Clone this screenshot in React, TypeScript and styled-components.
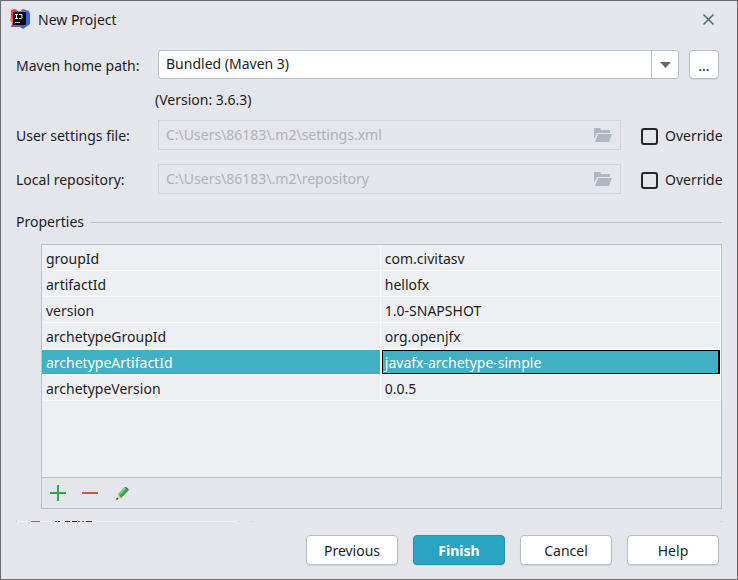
import React, { useState } from "react";
import styled, { createGlobalStyle, css } from "styled-components";

const GlobalStyle = createGlobalStyle`
  * { box-sizing: border-box; }
  body { margin: 0; background: #e4e6eb; }
  body, button, input, select {
    font-family: "Noto Sans", "Open Sans", sans-serif;
    font-size: 14px;
    line-height: 20px;
    color: #1d1d1d;
  }
`;

const Dialog = styled.main`
  display: flex;
  flex-direction: column;
  min-height: 100vh;
  padding: 0 15px 14px;
  border: 1px solid #6b6b6e;
  background: #e4e6eb;
`;

const TitleBar = styled.header`
  display: flex;
  align-items: center;
  height: 36px;
  margin-left: -6px;
`;

const Title = styled.h1`
  flex: 1;
  margin: 0 0 0 7px;
  padding-top: 1px;
  font-size: 14px;
  font-weight: 400;
`;

const CloseButton = styled.button`
  display: flex;
  margin-right: 7px;
  padding: 0;
  border: 0;
  background: none;
`;

const Form = styled.form`
  display: grid;
  grid-template-columns: 142px 1fr;
  align-items: center;
  margin-top: 13px;
`;

const FieldLabel = styled.label`
  padding-top: 2px;
  white-space: nowrap;
`;

const Controls = styled.div`
  display: flex;
  align-items: center;
  gap: 10px;
  height: 29px;
  padding-right: 3px;
`;

const ComboFrame = styled.div`
  display: flex;
  flex: 1;
  position: relative;
`;

const Combo = styled.select`
  flex: 1;
  height: 29px;
  padding: 0 34px 2px 7px;
  appearance: none;
  border: 1px solid #b4bfca;
  border-radius: 3px;
  background: #fff;
`;

const ComboArrow = styled.span`
  position: absolute;
  top: 1px;
  right: 1px;
  bottom: 1px;
  display: flex;
  align-items: center;
  justify-content: center;
  width: 27px;
  border-left: 1px solid #b4bfca;
  pointer-events: none;
`;

const buttonFace = css`
  padding: 0;
  border: 1px solid #b4bfca;
  border-radius: 4px;
  background: #fff;
  box-shadow: 0 1px 1px #cfd4db;
`;

const MoreButton = styled.button`
  ${buttonFace}
  width: 30px;
  height: 29px;
  padding-top: 3px;
`;

const Version = styled.p`
  grid-column: 2;
  margin: 11px 0 10px -3px;
`;

const PathRow = styled.div`
  display: flex;
  align-items: center;
  gap: 20px;
  height: 30px;
`;

const PathFrame = styled.div`
  display: flex;
  flex: 1;
  align-items: center;
  height: 30px;
  padding: 0 8px 0 7px;
  border: 1px solid #d0d3d6;
`;

const PathInput = styled.input`
  flex: 1;
  min-width: 0;
  height: 28px;
  padding: 0 0 2px;
  border: 0;
  outline: 0;
  background: none;
  &:disabled { color: #b1b3b6; }
`;

const CheckLabel = styled.label`
  display: flex;
  align-items: center;
  gap: 7px;
  width: 81px;
  padding-top: 2px;
  white-space: nowrap;
`;

const CheckBox = styled.input`
  flex: none;
  appearance: none;
  width: 17px;
  height: 17px;
  margin: 0;
  border: 2px solid #252826;
  border-radius: 3px;
  &:checked { background: #29a4c3; }
`;

const Spacer = styled.div`
  grid-column: 1 / -1;
  height: 14px;
`;

const Section = styled.section`
  display: flex;
  flex: 1;
  flex-direction: column;
`;

const SectionTitle = styled.h2`
  display: flex;
  align-items: center;
  gap: 7px;
  margin: 18px 0 12px;
  font-size: 14px;
  font-weight: 400;
  &::after {
    content: "";
    flex: 1;
    height: 1px;
    background: #b9c2cc;
  }
`;

const TablePanel = styled.div`
  display: flex;
  flex: 1;
  flex-direction: column;
  margin-left: 25px;
  border: 1px solid #b9c2cc;
  background: #eeeff3;
`;

const Table = styled.table`
  width: 100%;
  table-layout: fixed;
  border-collapse: separate;
  border-spacing: 0;
`;

const NameColumn = styled.col`
  width: 49.9%;
`;

const Cell = styled.td<{ $selected?: boolean; $focused?: boolean }>`
  height: 26px;
  padding: 2px 4px 0;
  border: solid #f8f9fb;
  border-width: 0 1px 1px 0;
  ${({ $selected }) =>
    $selected &&
    css`
      padding-top: 1px;
      border-top-width: 1px;
      background: #40b0c4;
      background-clip: padding-box;
      color: #fff;
    `}
  ${({ $focused }) =>
    $focused &&
    css`
      padding-left: 3px;
      border-left-width: 1px;
      box-shadow: inset 0 0 0 1px #000, inset -2px 0 0 #000;
    `}
`;

const ToolBar = styled.div`
  display: flex;
  align-items: center;
  gap: 16px;
  height: 31px;
  margin-top: auto;
  padding-left: 8px;
  border-top: 1px solid #b9c2cc;
  background: #e4e6eb;
`;

const ToolButton = styled.button`
  display: flex;
  padding: 0;
  border: 0;
  background: none;
`;

const ClippedRow = styled.div`
  display: flex;
  height: 1px;
  margin-top: 12px;
  overflow: hidden;
`;

const Strip = styled.span<{ $width: number; $color: string }>`
  flex: none;
  width: ${({ $width }) => $width}px;
  background: ${({ $color }) => $color};
`;

const StripFill = styled.span`
  flex: 1;
`;

const Footer = styled.footer`
  display: flex;
  justify-content: flex-end;
  gap: 15px;
  margin-top: 13px;
  padding-right: 3px;
`;

const DialogButton = styled.button<{ $primary?: boolean }>`
  ${buttonFace}
  width: 92px;
  height: 30px;
  padding-top: 2px;
  ${({ $primary }) =>
    $primary &&
    css`
      border-color: #2a8fa9;
      background: #29a4c3;
      color: #fff;
      font-weight: 700;
    `}
`;

const AppLogo = () => (
  <svg width="21" height="20" viewBox="0 0 21 20" aria-hidden="true">
    <path d="M1 7 5 6 8 13 4 15 0 12z" fill="#fc801d" />
    <path d="M1 1 5 0 10 3 9 9 3 10 1 8z" fill="#fe315d" />
    <path d="M1 18 3 12 12 14 10 18z" fill="#9a3fb5" />
    <path d="M10 3 13 0 19 2 20 5 20 15 13 20 7 16z" fill="#3c66d8" />
    <path d="M9 3 13 0 15 3z" fill="#8b62d9" />
    <rect x="3" y="3" width="13" height="13" fill="#08080a" />
    <path d="M5 5.500h3M6.500 5.500v4M5 9.500h3M9 5.500h3v3q0 1-1 1H9" fill="none" stroke="#fff" strokeWidth="1" />
    <path d="M5 13.500h5" stroke="#b4b4b4" />
  </svg>
);

const CloseIcon = () => (
  <svg width="13" height="13" viewBox="0 0 13 13" aria-hidden="true">
    <path d="M1.500 1.500l10 10M11.500 1.500l-10 10" stroke="#546e7a" strokeWidth="1.600" />
  </svg>
);

const ArrowIcon = () => (
  <svg width="11" height="6" viewBox="0 0 11 6" aria-hidden="true">
    <path d="M0 0h11L5.500 6z" fill="#666" />
  </svg>
);

const FolderIcon = () => (
  <svg width="18" height="14" viewBox="0 0 18 14" aria-hidden="true">
    <path d="M0 0h6l1 2h9v3H3L0 11z" fill="#afb8bf" />
    <path d="M4 6h14l-3 8H1z" fill="#afb8bf" />
  </svg>
);

const AddIcon = () => (
  <svg width="16" height="16" viewBox="0 0 16 16" aria-hidden="true">
    <path d="M8 0v16M0 8h16" stroke="#2ba84a" strokeWidth="2" />
  </svg>
);

const RemoveIcon = () => (
  <svg width="16" height="16" viewBox="0 0 16 16" aria-hidden="true">
    <path d="M0 8h16" stroke="#cc5449" strokeWidth="2" />
  </svg>
);

const EditIcon = () => (
  <svg width="16" height="16" viewBox="0 0 16 16" aria-hidden="true">
    <path d="M4 9 7 13 3 14.500 2.500 14z" fill="#f0c98c" />
    <path d="M2 15 3 12.500 4.500 14z" fill="#333" />
    <path d="M4 9 10.500 2.500 14.500 5.500 7 13z" fill="#35a24c" />
    <path d="M4 9 10.500 2.500 12 3.800 5.500 10.600z" fill="#78d47f" />
    <path d="M10.500 2.500 12 2 14.500 4 14.500 5.500z" fill="#5a5560" />
  </svg>
);

const properties = [
  ["groupId", "com.civitasv"],
  ["artifactId", "hellofx"],
  ["version", "1.0-SNAPSHOT"],
  ["archetypeGroupId", "org.openjfx"],
  ["archetypeArtifactId", "javafx-archetype-simple"],
  ["archetypeVersion", "0.0.5"],
];

const clippedStrips: [number, string][] = [
  [1, "#b9c2cc"], [14, "#f1f2f5"], [9, "#5080e0"], [15, "#f1f2f5"],
  [2, "#3c506e"], [1, "#f1f2f5"], [2, "#3a2c2c"], [5, "#f1f2f5"],
  [5, "#222"], [2, "#f1f2f5"], [5, "#222"], [1, "#f1f2f5"],
  [2, "#8a6a4a"], [2, "#f1f2f5"], [2, "#8a6a4a"], [2, "#f1f2f5"],
  [6, "#4a3a30"], [146, "#f1f2f5"], [1, "#b9c2cc"], [12, "#e4e6eb"],
  [1, "#b9c2cc"],
];

interface PathSettingProps {
  id: string;
  label: string;
  path: string;
}

const PathSetting = ({ id, label, path }: PathSettingProps) => {
  const [override, setOverride] = useState(false);
  return (
    <>
      <FieldLabel htmlFor={id}>{label}</FieldLabel>
      <PathRow>
        <PathFrame>
          <PathInput id={id} defaultValue={path} disabled={!override} />
          <FolderIcon />
        </PathFrame>
        <CheckLabel>
          <CheckBox
            type="checkbox"
            checked={override}
            onChange={(event) => setOverride(event.target.checked)}
          />
          Override
        </CheckLabel>
      </PathRow>
    </>
  );
};

export default function App() {
  const [selected, setSelected] = useState(4);
  return (
    <>
      <GlobalStyle />
      <Dialog>
        <TitleBar>
          <AppLogo />
          <Title>New Project</Title>
          <CloseButton aria-label="Close"><CloseIcon /></CloseButton>
        </TitleBar>

        <Form>
          <FieldLabel htmlFor="maven-home">Maven home path:</FieldLabel>
          <Controls>
            <ComboFrame>
              <Combo id="maven-home">
                <option>Bundled (Maven 3)</option>
              </Combo>
              <ComboArrow><ArrowIcon /></ComboArrow>
            </ComboFrame>
            <MoreButton type="button">...</MoreButton>
          </Controls>
          <Version>(Version: 3.6.3)</Version>
          <PathSetting id="settings-file" label="User settings file:" path="C:\Users\86183\.m2\settings.xml" />
          <Spacer />
          <PathSetting id="repository" label="Local repository:" path="C:\Users\86183\.m2\repository" />
        </Form>

        <Section>
          <SectionTitle>Properties</SectionTitle>
          <TablePanel>
            <Table>
              <colgroup>
                <NameColumn />
                <col />
              </colgroup>
              <tbody>
                {properties.map(([name, value], index) => (
                  <tr key={name} onClick={() => setSelected(index)}>
                    <Cell $selected={index === selected}>{name}</Cell>
                    <Cell $selected={index === selected} $focused={index === selected}>{value}</Cell>
                  </tr>
                ))}
              </tbody>
            </Table>
            <ToolBar>
              <ToolButton aria-label="Add"><AddIcon /></ToolButton>
              <ToolButton aria-label="Remove"><RemoveIcon /></ToolButton>
              <ToolButton aria-label="Edit"><EditIcon /></ToolButton>
            </ToolBar>
          </TablePanel>
        </Section>

        <ClippedRow aria-hidden="true">
          {clippedStrips.map(([width, color], index) => (
            <Strip key={index} $width={width} $color={color} />
          ))}
          <StripFill />
          <Strip $width={1} $color="#b9c2cc" />
        </ClippedRow>

        <Footer>
          <DialogButton>Previous</DialogButton>
          <DialogButton $primary>Finish</DialogButton>
          <DialogButton>Cancel</DialogButton>
          <DialogButton>Help</DialogButton>
        </Footer>
      </Dialog>
    </>
  );
}
